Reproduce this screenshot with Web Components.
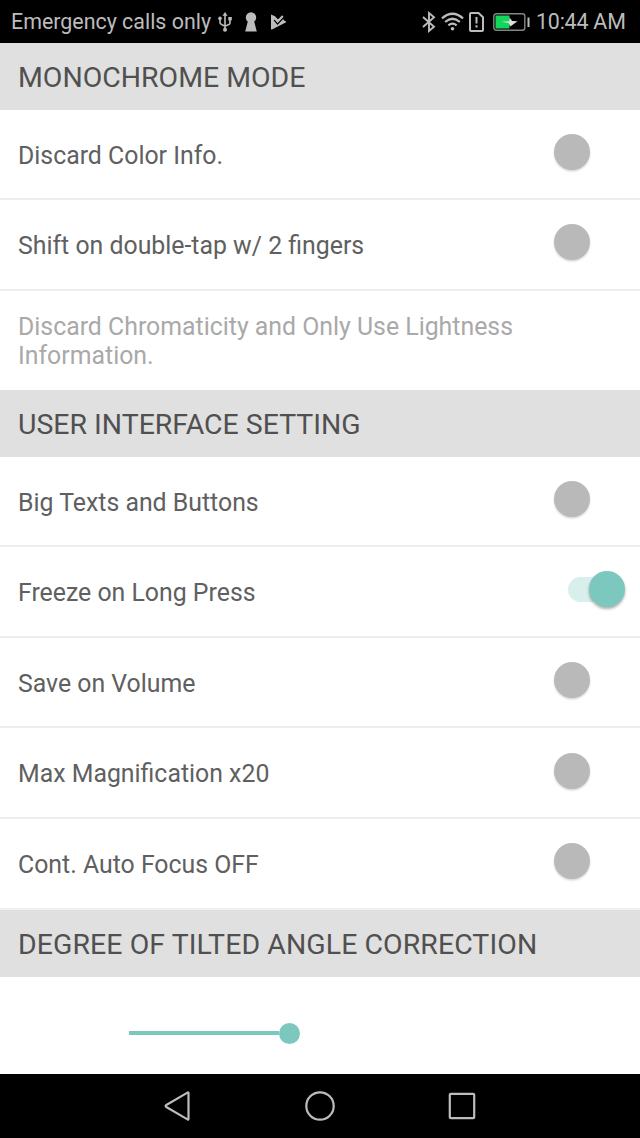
<!DOCTYPE html>
<html lang="en">
<head>
<meta charset="utf-8">
<title>Settings</title>
<style>
html,body{margin:0;background:#fff}
body{width:640px;height:1138px;overflow:hidden;font-family:Roboto,"Noto Sans",sans-serif}
</style>
</head>
<body>
<settings-screen></settings-screen>
<script>
const define = (name, css, html, setup) => {
  const t = document.createElement('template');
  t.innerHTML = `<style>*{box-sizing:border-box}${css}</style>${html}`;
  customElements.define(name, class extends HTMLElement {
    constructor() {
      super();
      this.attachShadow({mode: 'open'}).append(t.content.cloneNode(true));
    }
    connectedCallback() { if (setup) setup(this); }
  });
};

define('status-bar', `
:host{display:flex;align-items:center;height:42.600px;flex:none;background:#000;color:#bcbcbc;padding:2px 14px 0 11px;font-size:21.4px;line-height:26px;white-space:nowrap}
svg{display:block;flex:none}
.left{width:201px}
.usb{margin-left:6px}.key{margin-left:13px}.play{margin-left:13px}
.bt{margin-left:auto}.wifi{margin-left:5px}.sim{margin-left:5px}.bat{margin-left:9px}
.time{width:90px;margin-left:6px;letter-spacing:-.2px}
`, `
<span class="left">Emergency calls only</span>
<svg class="usb" width="14" height="20" viewBox="0 0 14 20" fill="none" stroke="#bcbcbc" stroke-width="1.600"><path d="M7 3v13M2 6.500v4.200q0 1 1 1.400l4 2.200M12 8v3q0 1-1 1.400l-4 1.900"/><g fill="#bcbcbc" stroke="none"><path d="M7 0l2.600 3.800H4.400z"/><circle cx="7" cy="17.800" r="2"/><circle cx="2" cy="6.400" r="1.800"/><path d="M10.300 5h3.500v3.400h-3.500z"/></g></svg>
<svg class="key" width="12" height="20" viewBox="0 0 12 20" fill="#bcbcbc"><path d="M6 .2a5.200 5.200 0 0 1 5.200 5.200c0 1.900-.9 3.300-2 4.200L11.800 19.500H.2L2.800 9.600C1.700 8.700.8 7.300.8 5.400A5.200 5.200 0 0 1 6 .2z"/></svg>
<svg class="play" width="17" height="18" viewBox="0 0 17 18"><path d="M1 1.500L5 3.200 8 6.400 12.500 3.500l1.200 3.800 2 1q1 .7 0 1.300L2 16.500q-1 .4-1-.6z" fill="#bcbcbc"/><path d="M4.200 7l3.300 4L13.200 5" stroke="#000" stroke-width="1.300" fill="none"/><path d="M5 5.300l2.700 2.900L12.800 3" stroke="#bcbcbc" stroke-width="2" fill="none"/></svg>
<svg class="bt" width="14" height="22" viewBox="0 0 14 22" fill="none" stroke="#bcbcbc" stroke-width="1.900"><path d="M1 6l11 9.800L7 20V2l5 4.200L1 16"/></svg>
<svg class="wifi" width="23" height="20" viewBox="0 0 24 20" fill="none" stroke="#bcbcbc" stroke-width="2.300"><path d="M1 6.200Q12-3.400 23 6.200M4.300 10Q12 3.200 19.700 10M7.700 13.500Q12 9.800 16.300 13.500"/><circle cx="12" cy="17" r="1.900" fill="#bcbcbc" stroke="none"/></svg>
<svg class="sim" width="15" height="20" viewBox="0 0 15 20" fill="none" stroke="#bcbcbc" stroke-width="2"><path d="M2 1h7.500L14 5.200V18q0 1-1 1H2q-1 0-1-1V2q0-1 1-1zM7.500 5v6.500M7.500 13.200v2.200"/></svg>
<svg class="bat" width="37" height="18" viewBox="0 0 37 18"><rect x=".8" y=".8" width="31" height="16.400" rx="2.500" fill="none" stroke="#858585" stroke-width="1.400"/><path d="M2.500 2.500h14v13h-14z" fill="#13d75b"/><path d="M34.500 4.500h2v9.500h-2z" fill="#bcbcbc"/><path d="M8.500 8.800l7.600-.6.500-3.800 2.500 3.500 5.400.3-7.200 5.400-1.700-3.600z" fill="#d8e4da"/></svg>
<span class="time">10:44 AM</span>
`);

define('section-header', `
:host{display:flex;align-items:center;height:67px;flex:none;background:#e0e0e0;color:#505050;padding:3px 18px 0;font-size:28.45px;line-height:34px;white-space:nowrap}
:host([wide]){letter-spacing:.08px}
`, `<slot></slot>`);

define('toggle-switch', `
:host{display:flex;align-items:center;width:71px;height:36px}
.track{display:flex;align-items:center;height:25px;width:50px;margin-left:14px;border-radius:13px}
.thumb{width:36px;height:36px;flex:none;border-radius:50%;background:#b9b9b9;margin-left:-14px;box-shadow:0 1.500px 2px rgba(0,0,0,.16)}
:host([on]) .track{background:#d8efec}
:host([on]) .thumb{background:#7dc8be;margin-left:21px;box-shadow:0 2px 3px rgba(0,0,0,.32)}
`, `<div class="track"><div class="thumb"></div></div>`);

define('setting-row', `
:host{display:flex;align-items:center;justify-content:space-between;height:90.600px;flex:none;border-bottom:2px solid #ededed;color:#606060;padding:0 15px 0 18px;font-size:24.850px;line-height:30px;white-space:nowrap}
:host([last]){border-bottom-color:#f0f0f0}
.label{padding-top:3.400px}
toggle-switch{margin-bottom:4.200px}
`, `<span class="label"><slot></slot></span><toggle-switch></toggle-switch>`,
  el => el.shadowRoot.querySelector('toggle-switch').toggleAttribute('on', el.hasAttribute('on')));

define('setting-note', `
:host{display:block;height:98.800px;flex:none;color:#a9a9a9;padding:21.500px 100px 0 18px;font-size:24.850px;line-height:29.170px}
`, `<slot></slot>`);

define('angle-slider', `
:host{display:flex;align-items:center;flex:1;padding:16px 0 0 128.500px}
.line{width:150.500px;height:4px;background:#7dc8be}
.knob{width:21px;height:21px;border-radius:50%;background:#7dc8be}
`, `<div class="line"></div><div class="knob"></div>`);

define('nav-bar', `
:host{display:flex;justify-content:center;gap:112px;align-items:center;height:64px;flex:none;background:#000}
svg{display:block;width:30px;height:30px;fill:none;stroke:#bcbcbc;stroke-width:2.200}
`, `
<svg viewBox="0 0 30 30"><path d="M3.300 14L24.500 1.600q1-.5 1 .6v25.600q0 1.100-1 .6L3.300 16q-1.400-1 0-2z"/></svg>
<svg viewBox="0 0 30 30"><circle cx="15" cy="15" r="13.700"/></svg>
<svg viewBox="0 0 30 30"><rect x="2.800" y="2.800" width="24.400" height="24.400" rx="1"/></svg>
`);

define('settings-screen', `
:host{display:flex;flex-direction:column;width:640px;height:1138px;background:#fff}
`, `
<status-bar></status-bar>
<section-header>MONOCHROME MODE</section-header>
<setting-row>Discard Color Info.</setting-row>
<setting-row>Shift on double-tap w/ 2 fingers</setting-row>
<setting-note>Discard Chromaticity and Only Use Lightness Information.</setting-note>
<section-header>USER INTERFACE SETTING</section-header>
<setting-row>Big Texts and Buttons</setting-row>
<setting-row on>Freeze on Long Press</setting-row>
<setting-row>Save on Volume</setting-row>
<setting-row>Max Magnification x20</setting-row>
<setting-row last>Cont. Auto Focus OFF</setting-row>
<section-header wide>DEGREE OF TILTED ANGLE CORRECTION</section-header>
<angle-slider></angle-slider>
<nav-bar></nav-bar>
`);
</script>
</body>
</html>
